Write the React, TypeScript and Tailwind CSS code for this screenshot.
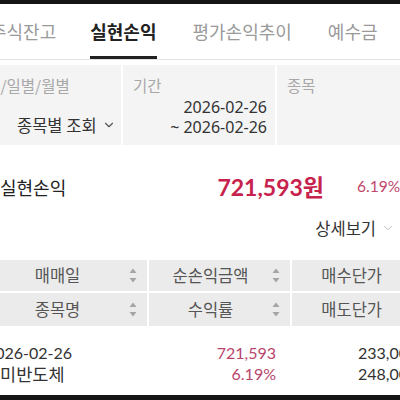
import React from 'react';
import { ChevronDown } from 'lucide-react';

const kr = "font-['Noto_Sans_CJK_KR','Noto_Sans',sans-serif]";
const num = "font-['Lato','Noto_Sans_CJK_KR',sans-serif]";

const tabs = ['주식잔고', '실현손익', '평가손익추이', '예수금'];

const SortIcon: React.FC = () => (
  <svg width="8" height="15" viewBox="0 0 8 15" className="shrink-0">
    <path d="M4 0.5 L7.5 5 L0.5 5 Z" fill="#a5a5a5" />
    <path d="M4 14.5 L7.5 10 L0.5 10 Z" fill="#a5a5a5" />
  </svg>
);

const App: React.FC = () => {
  return (
    <div className={`w-[400px] h-[400px] overflow-hidden bg-white flex flex-col ${kr}`}>
      <div className="h-[4px] bg-[#151515] shrink-0" />

      {/* tabs */}
      <div className="h-[55px] flex items-stretch gap-[36px] -ml-[10px] shrink-0">
        {tabs.map((t, i) => (
          <div
            key={t}
            className={`flex items-center whitespace-nowrap text-[18px] ${
              i === 0 ? 'mr-[-2px]' : ''
            } ${
              i === 1
                ? 'font-bold text-[#222] border-b-[3px] border-[#222] pt-[3px]'
                : 'text-[#9a9a9a]'
            }`}
          >
            {t}
          </div>
        ))}
      </div>
      <div className="h-px bg-[#e2e2e2] shrink-0" />

      {/* filters */}
      <div className="mt-[5px] h-[80px] flex gap-[2px] shrink-0">
        <div className="w-[121px] bg-[#f4f4f4] flex flex-col overflow-hidden">
          <div className="mt-[10px] -ml-[28px] text-[15.5px] leading-[20px] text-[#a8a8a8] whitespace-nowrap">
            종목/일별/월별
          </div>
          <div className="mt-[20px] ml-[17px] flex items-center gap-[5px] text-[16.5px] leading-[20px] text-[#333]">
            <span>종목별 조회</span>
            <ChevronDown size={14} strokeWidth={2} className="text-[#555]" />
          </div>
        </div>
        <div className="w-[152px] bg-[#f4f4f4] flex flex-col pl-[10px] pr-[8px]">
          <div className="mt-[10px] text-[15.5px] leading-[20px] text-[#a8a8a8]">기간</div>
          <div className="mt-[2px] text-right text-[16px] leading-[20px] text-[#333] font-['Noto_Sans',sans-serif]">
            <div>2026-02-26</div>
            <div>~ 2026-02-26</div>
          </div>
        </div>
        <div className="flex-1 bg-[#f4f4f4] pl-[10px]">
          <div className="mt-[10px] text-[15.5px] leading-[20px] text-[#a8a8a8]">종목</div>
        </div>
      </div>

      {/* summary */}
      <div className="mt-[21px] h-[42px] flex items-center shrink-0">
        <div className="flex-1 text-[18px] text-[#222]">실현손익</div>
        <div className={`${num} text-[23px] font-bold text-[#c6224d] whitespace-nowrap`}>
          721,593<span className={kr}>원</span>
        </div>
        <div className={`${num} w-[76px] pl-[33px] text-[15.5px] text-[#c0456b] whitespace-nowrap`}>
          6.19%
        </div>
      </div>

      <div className="mt-[7px] h-[26px] flex items-center justify-end pr-[5px] gap-[5px] shrink-0">
        <span className="text-[16.5px] text-[#333]">상세보기</span>
        <ChevronDown size={14} strokeWidth={1.5} className="text-[#b0b0b0]" />
      </div>

      {/* table header */}
      <div className="mt-[19px] -ml-[18px] w-[440px] flex flex-col gap-[2px] shrink-0 text-[16.5px] text-[#555]">
        <div className="h-[31px] flex gap-[2px]">
          <div className="w-[165px] bg-[#ebebeb] flex items-center pr-[10px]">
            <span className="flex-1 text-center pl-[4px]">매매일</span>
            <SortIcon />
          </div>
          <div className="w-[141px] bg-[#ebebeb] flex items-center pr-[10px]">
            <span className="flex-1 text-center">순손익금액</span>
            <SortIcon />
          </div>
          <div className="w-[130px] bg-[#ebebeb] flex items-center justify-end pr-[40px]">
            매수단가
          </div>
        </div>
        <div className="h-[33px] flex gap-[2px]">
          <div className="w-[165px] bg-[#ebebeb] flex items-center pr-[10px]">
            <span className="flex-1 text-center pl-[4px]">종목명</span>
            <SortIcon />
          </div>
          <div className="w-[141px] bg-[#ebebeb] flex items-center pr-[10px]">
            <span className="flex-1 text-center">수익률</span>
            <SortIcon />
          </div>
          <div className="w-[130px] bg-[#ebebeb] flex items-center justify-end pr-[40px]">
            매도단가
          </div>
        </div>
      </div>

      {/* data row */}
      <div className={`mt-[16px] -ml-[18px] w-[440px] flex gap-[2px] text-[16px] leading-[21px] text-[#333] ${num} shrink-0`}>
        <div className="w-[165px] pl-[4px]">
          <div>2026-02-26</div>
          <div className={`${kr} text-[17.5px] -ml-[2px]`}>한미반도체</div>
        </div>
        <div className="w-[141px] pr-[14px] text-right text-[#b8456c]">
          <div>721,593</div>
          <div>6.19%</div>
        </div>
        <div className="w-[130px] pl-[66px] whitespace-nowrap">
          <div>233,000</div>
          <div>248,000</div>
        </div>
      </div>

      <div className="flex-1" />
      <div className="h-[5px] bg-[#151515] shrink-0" />
    </div>
  );
};

export default App;
